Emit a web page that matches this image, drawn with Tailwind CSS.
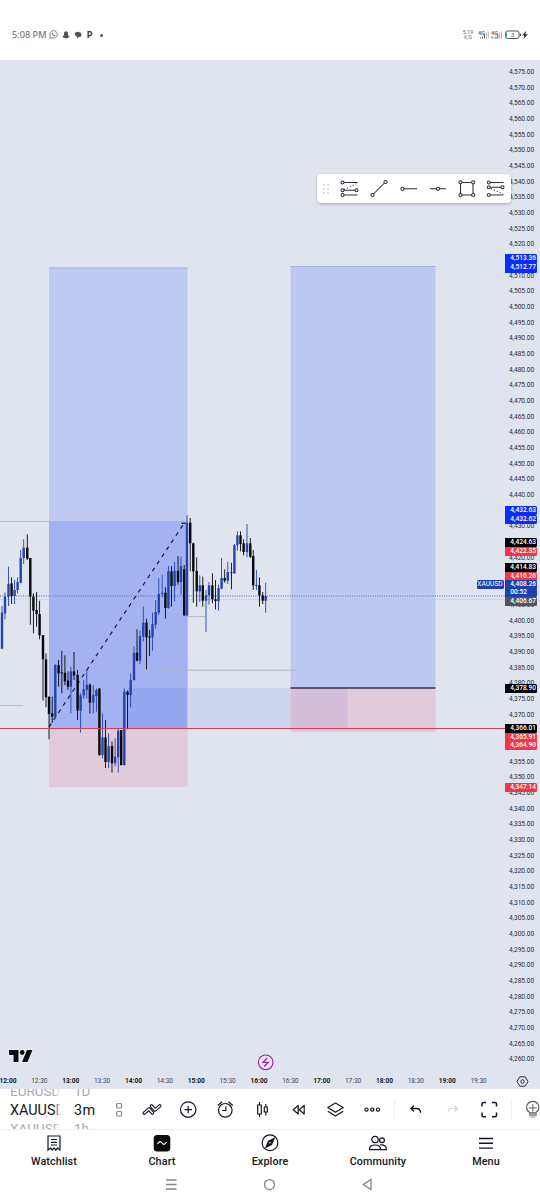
<!DOCTYPE html>
<html lang="en">
<head>
  <meta charset="UTF-8">
  <meta name="viewport" content="width=device-width, initial-scale=1.0">
  <script src="https://cdn.jsdelivr.net/npm/@tailwindcss/browser@4"></script>
  <title>XAUUSD Chart</title>
</head>
<body class="bg-white w-[540px] h-[1200px] overflow-hidden flex flex-col font-['Roboto',sans-serif] text-[#131722]">

  <!-- Status bar -->
  <header class="h-[60px] shrink-0 flex items-center justify-between pl-3 pr-[11px] pt-[10px] text-[#666]">
    <div class="flex items-center">
      <span class="w-[35px] text-[9.2px] leading-none whitespace-nowrap font-['Noto_Sans',sans-serif]">5:08 PM</span>
      <svg class="ml-[2px] w-[9px] h-[9px]" viewBox="0 0 24 24" fill="none" stroke="#666" stroke-width="2"><path d="M2 22l1.500-5.500A10 10 0 1 1 7.500 20.500z"/><path d="M8 7c-1 2 0 5 3 7.500s5 2.500 6 1l-2.500-2-1.500 1c-2-1-3-2-3.500-3.500l1-1z" fill="#666" stroke-width="1"/></svg>
      <svg class="ml-[4px] w-[8px] h-[8px]" viewBox="0 0 24 24" fill="#555"><path d="M12 1c4 0 6 3 6 6v4l3 5 2 2-5 2-3 1-3 2-3-2-3-1-5-2 2-2 3-5V7c0-3 2-6 6-6z"/></svg>
      <svg class="ml-[4px] w-[8px] h-[8px]" viewBox="0 0 24 24" fill="#555"><path d="M2 7l5-4 6-1 7 3 3 6-3 6-6 1-4 5-1-6-5-3z"/></svg>
      <span class="ml-[5px] text-[8.5px] leading-none font-black text-[#444]">P</span>
      <span class="ml-[7px] mt-[1px] size-[3px] rounded-full bg-[#555]"></span>
    </div>
    <div class="flex items-center gap-[2px]">
      <div class="w-[12px] flex flex-col items-center text-[5.3px] leading-[5px] mr-[2px]"><span>5.19</span><span class="text-[4.5px]">K/S</span></div>
      <svg class="w-[11px] h-[10px]" viewBox="0 0 11 10"><text x="0" y="5" font-size="5.500" font-weight="700" fill="#666">4G</text><path d="M2.500 8.500v-1M4.500 8.500v-2M6.500 8.500v-4" stroke="#555"/><path d="M8.500 8.500v-6M10.300 8.500v-7" stroke="#bbb"/></svg>
      <svg class="w-[11px] h-[10px]" viewBox="0 0 11 10"><text x="0" y="5" font-size="5.500" font-weight="700" fill="#666">4G</text><path d="M1 8.500v-2M3 8.500v-1M5 8.500v-2M6.800 8.500v-4" stroke="#555"/><path d="M8.700 8.500v-6M10.500 8.500v-7" stroke="#ccaab0"/></svg>
      <svg class="w-[25px] h-[10px]" viewBox="0 0 25 10"><rect x="1.600" y="1" width="13.500" height="7.500" rx="2" fill="#fff" stroke="#555"/><path d="M2.200 2.500v4.500" stroke="#2fae70" stroke-width="1.500"/><text x="7" y="7" font-size="6" fill="#555">3</text><path d="M16.500 3.500v2.500" stroke="#555" stroke-width="1.300"/><path d="M22 1l-4 4.500h2.300L19.500 9l4.500-4.800h-2.500z" fill="#333"/></svg>
    </div>
  </header>

  <!-- Chart -->
  <main class="relative h-[1029px] shrink-0 bg-[#dfe4ef] flex flex-col">
    <div class="h-[1013px] flex">
      <svg class="w-[505px] h-[1013px] shrink-0" viewBox="0 60 505 1013">
        <!-- long positions -->
        <rect x="49" y="267.500" width="138.500" height="460.500" fill="#bfcaf0"/>
        <rect x="49" y="522" width="138.500" height="206" fill="#a3b3f2"/>
        <rect x="49" y="728" width="138.500" height="59" fill="#e2cbd8"/>
        <rect x="127" y="688" width="60.500" height="40" fill="#95a7ef"/>
        <rect x="187.500" y="688" width="103" height="40" fill="#ced4ee"/>
        <rect x="290.500" y="266" width="145" height="422" fill="#bdc9f0"/>
        <rect x="290.500" y="688" width="145" height="44" fill="#e2cbd8"/>
        <rect x="290.500" y="688" width="57" height="40" fill="#d3bfd7"/>
        <path d="M49 268h138.500M290.500 266.500h145" stroke="#a0acd8" stroke-width=".8"/>
        <!-- liquidity levels -->
        <path d="M0 521.500h187.500M187 616.500h18M146 670.200h151M0 705.500h23M90 685.500h68" stroke="#a9afc3" stroke-width=".8" fill="none"/>
        <path d="M290.500 688h145" stroke="#36304e" stroke-width="1.300"/>
        <path d="M0 596h505" stroke="#4b67c8" stroke-dasharray="1 1.300"/>
        <path d="M0 599.500h505" stroke="#b3bfdf" stroke-width=".8" stroke-dasharray="1 1.300"/>
        <path d="M49 727L184 523.500" stroke="#161b38" stroke-width="1.200" stroke-dasharray="4 4.500"/>
        <path d="M181.500 523.300h4" stroke="#161b38" stroke-width="1.200"/>
        <g id="candles"></g>
        <path d="M0 728.500h505" stroke="#d3405f"/>
        <!-- TradingView mark -->
        <g fill="#0b0d12" stroke="#f4f6fa" stroke-width="1.500" paint-order="stroke"><path d="M9 1050h9.500v12h-5v-7H9z"/><path d="M27 1050h5.500l-5 12H22z"/><circle cx="22.200" cy="1052.500" r="2.400"/></g>
        <g fill="none" stroke="#9327a8"><circle cx="265.700" cy="1062.300" r="7.300" fill="#f1eaf5" stroke-width="1.200"/><path d="M267.200 1058l-4.200 4.300h5.300l-4.200 4.300" stroke-width="1.300"/></g>
      </svg>
      <div id="prices" class="flex-1 pt-[5px] flex flex-col text-right pr-[5.8px] text-[6.6px] text-[#2a2e39] whitespace-nowrap"></div>
    </div>
    <div class="h-[16px] flex items-center relative overflow-hidden">
      <div id="times" class="flex shrink-0 -ml-[7.7px] pt-[1px] text-[6.6px] leading-none"></div>
      <svg class="absolute left-[516px] top-[2px] w-[13px] h-[13px]" viewBox="0 0 13 13" fill="none" stroke="#2a2e39"><path d="M3.800 1.800h5.400L12 6.500l-2.800 4.700H3.800L1 6.500z"/><circle cx="6.500" cy="6.500" r="1.700"/></svg>
    </div>

    <!-- price tags -->
    <div id="tags" class="text-[6.6px] font-medium text-white"></div>
    <div class="absolute left-[476.500px] top-[519.500px] w-[27px] h-[9.500px] rounded-[1.500px] bg-[#1e3fae] text-white text-[6.7px] leading-[9.500px] text-center">XAUUSD</div>

    <!-- drawing toolbar -->
    <div class="absolute left-[317px] top-[114px] w-[194px] h-[29px] rounded-[4px] bg-white shadow-[0_1px_3px_rgba(0,0,0,0.25)]">
      <svg class="w-[194px] h-[29px]" viewBox="317 174 194 29" fill="none" stroke="#2a2e39" stroke-width="1.050">
        <g fill="#aaa" stroke="none"><circle cx="324" cy="185" r=".7"/><circle cx="328" cy="185" r=".7"/><circle cx="324" cy="189" r=".7"/><circle cx="328" cy="189" r=".7"/><circle cx="324" cy="193" r=".7"/><circle cx="328" cy="193" r=".7"/></g>
        <path d="M344 182.500h13.500M344 190.300h11M344 195h13.500"/><path d="M344 189.500l13-6" stroke-dasharray="1 2.200"/>
        <path d="M373.500 194l11-11M404 188.800h13M430 188.800h16"/>
        <path d="M460.500 182.500h12.500v12.500h-12.500z"/>
        <path d="M490 182.500h13.500M490 187.200h11M490 195h13.500"/><path d="M491 188.500l12 5.500" stroke-dasharray="1 2.200"/>
        <g fill="#fff"><circle cx="342.500" cy="182.500" r="1.500"/><circle cx="342.500" cy="190.300" r="1.500"/><circle cx="356.500" cy="190.300" r="1.500"/><circle cx="342.500" cy="195" r="1.500"/><circle cx="372.500" cy="195" r="1.600"/><circle cx="385.500" cy="182" r="1.600"/><circle cx="402.500" cy="188.800" r="1.600"/><circle cx="438" cy="188.800" r="1.600"/><circle cx="460.500" cy="182.300" r="1.600"/><circle cx="473.200" cy="182.300" r="1.600"/><circle cx="460.500" cy="195" r="1.600"/><circle cx="473.200" cy="195" r="1.600"/><circle cx="488.800" cy="182.500" r="1.500"/><circle cx="488.800" cy="187.200" r="1.500"/><circle cx="502.500" cy="187.200" r="1.500"/><circle cx="488.800" cy="195" r="1.500"/></g>
      </svg>
    </div>
  </main>

  <!-- Symbol and tools row -->
  <section class="h-[41px] shrink-0 flex border-b border-[#eee] overflow-hidden">
    <div class="relative w-[60px] pl-[10px] overflow-hidden text-[14.4px] leading-[20px] whitespace-nowrap">
      <div class="-mt-[8.5px] h-[19px] text-[#aaa] text-[13.5px] leading-[20px]">EURUSD</div>
      <div class="h-[20px] leading-[21px]">XAUUSD</div>
      <div class="h-[20px] text-[#aaa] text-[13.5px] leading-[17px]">XAUUSD</div>
      <div class="absolute right-0 top-0 w-[6px] h-full bg-linear-to-r from-white/0 to-white/90"></div>
    </div>
    <div class="w-[40px] pl-[14px] text-[14.4px] leading-[20px] whitespace-nowrap">
      <div class="-mt-[8.5px] h-[19px] text-[#aaa] text-[13.5px] leading-[20px]">1D</div>
      <div class="h-[20px] leading-[21px] tracking-[0.3px]">3m</div>
      <div class="h-[20px] text-[#aaa] text-[13.5px] leading-[17px]">1h</div>
    </div>
    <svg class="w-[440px] h-[40px]" viewBox="100 1089 440 40" fill="none" stroke="#131722" stroke-width="1.200">
      <g stroke="#888"><rect x="116.700" y="1103.500" width="4.800" height="4.500" rx="1"/><rect x="116.700" y="1111.500" width="4.800" height="4.500" rx="1"/></g>
      <!-- indicators: two interlocking chevrons -->
      <g stroke-linejoin="round" stroke-linecap="round">
        <path d="M144.300 1113l4.700-4 3.500 4" stroke-width="3.600"/><path d="M144.300 1113l4.700-4 3.500 4" stroke="#fff" stroke-width="1.300"/>
        <path d="M151.500 1106l3.500 4 4.700-4" stroke-width="3.600"/><path d="M151.500 1106l3.500 4 4.700-4" stroke="#fff" stroke-width="1.300"/>
      </g>
      <circle cx="188.200" cy="1109.600" r="7.700"/><path d="M184.500 1109.600h7.400M188.200 1105.900v7.400"/>
      <circle cx="225.300" cy="1110.300" r="6.800"/><path d="M225.800 1106.500v4h-3.500M217.800 1105.500l4.300-3.700M232.800 1105.500l-4.300-3.700"/>
      <path d="M257.700 1105h3.600v9h-3.600zM259.500 1102v3M259.500 1114v3M264.300 1107h3v5h-3zM265.800 1104v3M265.800 1112v3.500"/>
      <path d="M298.200 1105.500v8.500l-5-4.250zM304.200 1105.500v8.500l-5-4.250z" stroke-linejoin="round"/>
      <path d="M335.500 1103l7.700 4.600-7.700 4.700-7.700-4.700zM327.800 1111.300l7.700 4.800 7.700-4.800" stroke-linejoin="round"/>
      <circle cx="366.500" cy="1109.600" r="1.600"/><circle cx="372.300" cy="1109.600" r="1.600"/><circle cx="378" cy="1109.600" r="1.600"/>
      <path d="M394.500 1099v21M511.500 1099v21" stroke="#f0f0f0"/>
      <path d="M414 1105.500l-3 3 3 3M411.300 1108.500h5.200c2.500 0 4 1.500 4 4.300" stroke-width="1.300"/>
      <path d="M454.500 1105.500l3 3-3 3M457.200 1108.500h-5.200c-2.500 0-4 1.500-4 4.300" stroke="#d4d4d4"/>
      <path d="M482 1106.500v-2.500q0-1.500 1.500-1.500h2.500M492 1102.500h3q1.500 0 1.500 1.500v2.500M496.500 1112.500v2.700q0 1.500-1.500 1.500h-3M486 1116.700h-2.500q-1.500 0-1.500-1.500v-2.700" stroke-width="1.500"/>
      <!-- idea bulb -->
      <path d="M529.500 1112.500c-3.300-2-3.800-6.500-1.200-9.300 2.500-2.300 6.500-2.300 9 0 2.600 2.800 2.100 7.300-1.200 9.300z" stroke="#555"/><path d="M529 1107.800h7.600M532.800 1104v7.600" stroke="#777"/><path d="M529.500 1112.800h6.700v2.300h-6.700zM530.500 1117h4.700" fill="#aaa" stroke="#888"/>
    </svg>
  </section>

  <!-- Bottom tabs -->
  <nav class="h-[40px] shrink-0 grid grid-cols-5 text-[10.8px] font-medium text-center leading-[13px] tracking-[0.1px]">
    <div class="pt-[4px] flex flex-col items-center"><svg class="w-[18px] h-[18px] mb-[3px]" viewBox="0 0 18 18" fill="none" stroke="#131722" stroke-width="1.200"><path d="M3 2h12v14l-2.500-2-1.700 2L9 14l-1.800 2-1.700-2L3 16zM6 5.500h6M6 8.300h6M6 11h6"/></svg>Watchlist</div>
    <div class="pt-[4px] flex flex-col items-center"><svg class="w-[18px] h-[18px] mb-[3px]" viewBox="0 0 18 18"><rect x=".7" y="1" width="16.600" height="16.500" rx="3.500" fill="#0b0b0d"/><path d="M4.500 10c2-3 3-3 4.500-1s2.500 2 4.500-1" fill="none" stroke="#fff" stroke-width="1.200"/></svg>Chart</div>
    <div class="pt-[4px] flex flex-col items-center"><svg class="w-[18px] h-[18px] mb-[3px]" viewBox="0 0 18 18" fill="none" stroke="#131722" stroke-width="1.200"><circle cx="9" cy="8.800" r="7.900"/><path d="M13 4.500l-2.500 6L5 13.200l2.500-6z" fill="#131722"/><circle cx="9" cy="8.800" r=".8" fill="#fff" stroke="none"/></svg>Explore</div>
    <div class="pt-[4px] flex flex-col items-center"><svg class="w-[20px] h-[18px] mb-[3px]" viewBox="0 0 20 18" fill="none" stroke="#131722" stroke-width="1.200"><circle cx="7" cy="5.500" r="3.200"/><circle cx="14" cy="6.300" r="2.400"/><path d="M1.500 15.700c-.2-3 1.500-4.700 5.500-4.700s5.700 1.700 5.500 4.700zM12 11c4-.6 6.500.8 6.500 4.700h-6"/></svg>Community</div>
    <div class="pt-[4px] flex flex-col items-center"><svg class="w-[18px] h-[18px] mb-[3px]" viewBox="0 0 18 18" fill="none" stroke="#131722" stroke-width="1.400"><path d="M2 4.500h14M2 9.300h14M2 14.100h14"/></svg>Menu</div>
  </nav>

  <!-- System navigation -->
  <footer class="h-[30px] shrink-0">
    <svg class="w-[540px] h-[30px]" viewBox="0 1170 540 30" fill="none" stroke="#858585" stroke-width="1.300"><path d="M166 1180h10.500M166 1184.500h10.500M166 1189h10.500"/><circle cx="269.500" cy="1184.600" r="5"/><path d="M371 1179.500v10l-7.800-5z"/></svg>
  </footer>

  <script>
// Candles: x, high, body top, body bottom, low, direction (y in thirds of a pixel below 500)
const candles = [
  [2,318,338,446,446,1],[5,278,290,340,358,1],[8.5,200,252,290,318,1],[11.6,232,250,288,312,0],[14.6,240,270,288,312,1],
  [17.6,232,246,270,280,1],[20.7,150,174,248,250,1],[23.7,118,143,174,192,1],[27.3,103,143,176,180,0],[30.3,174,174,290,374,0],
  [33.4,280,290,332,400,0],[36.6,276,330,342,380,0],[39.6,302,342,406,418,0],[43,405,405,478,602,0],[46,460,478,592,622,0],
  [49,590,590,642,718,0],[52.2,590,640,650,668,0],[55.3,494,494,650,655,1],[58.6,480,495,520,560,0],[61.8,452,517,520,580,0],
  [64.9,466,518,544,555,0],[68,514,542,560,570,0],[70.9,500,514,560,640,1],[74,456,514,526,540,0],[77.6,510,525,632,660,0],
  [80.6,580,586,632,698,1],[83.7,540,568,586,596,1],[86.8,510,554,570,595,1],[89.9,550,554,608,640,0],[93.3,556,585,608,640,1],
  [96.4,565,570,588,635,1],[99.4,564,566,765,768,0],[102.5,640,712,765,775,1],[105.5,660,712,786,804,0],[108.6,700,738,786,804,1],
  [112,724,738,790,818,0],[115.1,715,770,790,800,1],[118.2,685,692,772,818,1],[121.2,690,690,795,797,0],[124.3,565,575,795,797,1],
  [127.5,572,575,585,688,0],[130.7,520,540,585,622,1],[134,440,458,540,542,1],[137,388,458,482,484,0],[140,392,408,482,492,1],
  [143.3,320,368,410,424,1],[146.5,356,368,412,508,0],[149.6,390,410,413,468,0],[152.5,338,372,412,452,1],[155.7,300,336,374,386,1],
  [158.8,234,282,338,345,1],[162.2,224,278,282,292,1],[165.4,262,278,324,356,0],[168.4,198,214,324,326,1],[171.5,198,214,258,320,0],
  [174.6,186,212,258,304,1],[178,168,212,246,254,0],[181,170,198,246,284,1],[184.2,195,208,346,348,0],[187,46,68,346,348,1],
  [190.2,54,68,130,214,0],[193.3,128,130,214,308,0],[196.7,172,213,274,320,0],[199.8,226,256,274,306,1],[202.8,230,256,302,320,0],
  [206,270,286,302,396,1],[209,246,256,286,314,1],[212.4,220,256,298,310,0],[215.5,240,298,303,328,0],[218.5,254,264,304,332,1],
  [221.6,174,234,266,268,1],[224.7,208,234,242,248,0],[227.8,185,216,242,252,1],[231.4,188,216,218,268,0],[234.4,132,136,220,222,1],
  [237.4,94,106,136,152,1],[240.5,94,106,132,154,0],[243.6,118,130,156,166,0],[247,72,130,156,172,1],[250.3,114,130,170,174,0],
  [253.2,150,168,256,270,0],[256.4,210,255,258,270,1],[259.4,232,256,286,320,0],[262.7,276,286,302,312,0],[265.7,248,288,302,338,1]
];
document.getElementById('candles').innerHTML = candles.map(([x, h, t, b, l, up]) => {
  const color = up ? '#2543b0' : '#08090d';
  return `<rect x="${x - 0.45}" y="${500 + h / 3}" width="0.9" height="${(l - h) / 3}" fill="${color}"/>` +
    `<rect x="${x - 1.2}" y="${500 + t / 3}" width="2.4" height="${(b - t) / 3}" fill="${color}"/>`;
}).join('');

// Price scale
let prices = '';
for (let p = 4575; p >= 4260; p -= 5) {
  prices += `<div class="h-[15.675px] leading-[15.675px] shrink-0">${p.toLocaleString('en-US')}.00</div>`;
}
document.getElementById('prices').innerHTML = prices;

// Time scale, full hours are bold
let times = '';
for (let i = 0; i < 16; i++) {
  const hour = 12 + Math.floor(i / 2);
  times += i % 2
    ? `<span class="w-[31.39px] shrink-0 text-center text-[#444955]">${hour}:30</span>`
    : `<span class="w-[31.39px] shrink-0 text-center font-bold">${hour}:00</span>`;
}
document.getElementById('times').innerHTML = times;

// Price tags: top, height, colour, label
const tags = [
  [194,9.5,'#0a2cff','4,513.36'],[203,9.5,'#0a2cff','4,512.77'],[445.5,9.5,'#0a2cff','4,432.63'],[454.5,9.3,'#0a2cff','4,432.62'],
  [477.8,9.3,'#000','4,424.63'],[487,9,'#f23645','4,422.35'],[502.5,9.3,'#000','4,414.83'],[511.5,9,'#f23645','4,410.26'],
  [519.7,9.3,'#1e3fae','4,408.26'],[528,9,'#1e3fae','00:52'],[537,9,'#555','4,406.67'],
  [623.7,9,'#000','4,378.90'],[663.8,9,'#000','4,366.01'],[672.5,9,'#f23645','4,365.91'],[681,9.3,'#f23645','4,364.90'],[722.5,9.3,'#f23645','4,347.14']
];
document.getElementById('tags').innerHTML = tags.map(([top, h, bg, label]) =>
  `<div class="absolute left-[505px] w-[32px] pl-[5.3px] rounded-r-[1.5px] leading-[9px] whitespace-nowrap" style="top:${top}px;height:${h}px;background:${bg}">${label}</div>`
).join('');
  </script>
</body>
</html>
